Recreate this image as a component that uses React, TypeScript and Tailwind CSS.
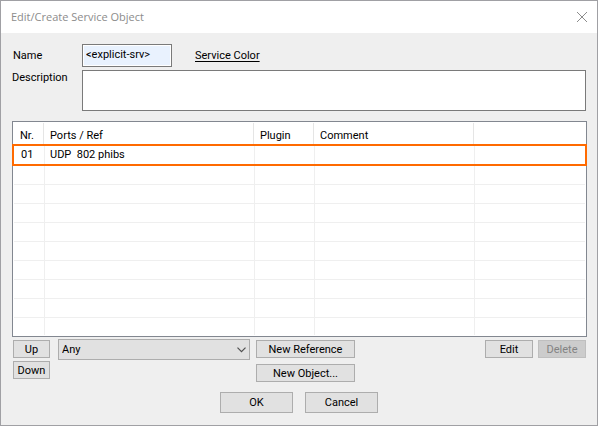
import React from "react";

const services = [{ nr: "01", ports: "UDP  802 phibs", plugin: "", comment: "" }];
const emptyRows = 9;

const Button = ({ children, className = "", disabled = false }) => {
  return (
    <button
      type="button"
      disabled={disabled}
      className={`border border-[#adadad] bg-[#e1e1e1] pt-px text-center whitespace-nowrap hover:bg-[#e5f1fb] disabled:border-[#bfbfbf] disabled:bg-[#cccccc] disabled:text-[#838383] ${className}`}
    >
      {children}
    </button>
  );
};

const ServiceForm = () => {
  return (
    <div className="flex flex-col gap-[3px] pr-px">
      <div className="flex items-center">
        <label htmlFor="name" className="w-[70px] pt-px pl-px">
          Name
        </label>
        <input
          id="name"
          defaultValue="<explicit-srv>"
          className="h-[23px] w-[90px] border border-[#7a7a7a] bg-[#e9f2fe] pl-[3px] pb-[2px] leading-4 outline-none ring-1 ring-inset ring-white"
        />
        <a href="#color" className="ml-[23px] pt-px underline underline-offset-2">
          Service Color
        </a>
      </div>
      <div className="flex">
        <label htmlFor="description" className="w-[70px] shrink-0">
          Description
        </label>
        <textarea
          id="description"
          className="h-[41px] min-w-0 flex-1 resize-none border border-[#7a7a7a] bg-white px-1 outline-none"
        />
      </div>
    </div>
  );
};

const ServiceTable = () => {
  return (
    <div className="mt-[10px] border border-[#828790] bg-white p-px">
      <table className="w-full table-fixed border-separate border-spacing-0 text-left">
        <colgroup>
          <col className="w-[30px]" />
          <col className="w-[210px]" />
          <col className="w-[60px]" />
          <col className="w-[160px]" />
          <col />
        </colgroup>
        <thead>
          <tr className="h-[23px] [&>th]:border-r [&>th]:border-[#e5e5e5] [&>th]:px-[6px] [&>th]:pt-[2px] [&>th]:pb-0 [&>th]:font-normal">
            <th>Nr.</th>
            <th>Ports / Ref</th>
            <th>Plugin</th>
            <th>Comment</th>
            <td></td>
          </tr>
        </thead>
        <tbody className="[&_td+td]:border-l [&_td]:border-[#efefef]">
          {services.map((service) => (
            <tr
              key={service.nr}
              className="h-[18px] whitespace-pre outline-2 outline-[#ff6a00]"
            >
              <td className="p-0 pl-[7px]">{service.nr}</td>
              <td className="p-0 pl-[5px]">{service.ports}</td>
              <td className="p-0 pl-[5px]">{service.plugin}</td>
              <td className="p-0 pl-[5px]">{service.comment}</td>
              <td className="p-0"></td>
            </tr>
          ))}
          {Array.from({ length: emptyRows }, (_, i) => (
            <tr
              key={i}
              className={
                i === 0
                  ? "h-[21px] [&>td]:border-b [&>td]:p-0"
                  : i === emptyRows - 1
                    ? "h-[17px] [&>td]:p-0"
                    : "h-[19px] [&>td]:border-b [&>td]:p-0"
              }
            >
              <td></td>
              <td></td>
              <td></td>
              <td></td>
              <td></td>
            </tr>
          ))}
        </tbody>
      </table>
    </div>
  );
};

const Toolbar = () => {
  return (
    <div className="mt-[2px] flex items-start px-px">
      <div className="flex w-[37px] flex-col gap-[3px] pt-px">
        <Button className="h-[18px]">Up</Button>
        <Button className="h-[18px]">Down</Button>
      </div>
      <div className="relative ml-2 w-[192px]">
        <select
          aria-label="Filter"
          className="block h-[21px] w-full appearance-none border border-[#adadad] bg-[#e1e1e1] pt-px pl-[3px] outline-none"
        >
          <option>Any</option>
        </select>
        <svg
          className="pointer-events-none absolute top-2 right-1 h-[6px] w-[9px]"
          viewBox="0 0 9 6"
          fill="none"
          stroke="#505050"
          strokeWidth="1.2"
        >
          <path d="M0.5 0.7L4.5 4.7L8.5 0.7" />
        </svg>
      </div>
      <div className="ml-[6px] flex w-[99px] flex-col gap-[6px] pt-px">
        <Button className="h-[18px]">New Reference</Button>
        <Button className="h-[18px]">New Object...</Button>
      </div>
      <div className="ml-auto flex gap-[5px] pt-px">
        <Button className="h-[18px] w-12">Edit</Button>
        <Button className="h-[18px] w-12" disabled>
          Delete
        </Button>
      </div>
    </div>
  );
};

const App = () => {
  return (
    <div className="border border-[#a0a0a4] bg-[#efefef] font-['Roboto',sans-serif] text-[11px] leading-4 text-black">
      <header className="flex h-8 items-center justify-between bg-white pr-[10px] pl-[10px]">
        <h1 className="font-['Open_Sans',sans-serif] text-[11px] text-[#8c8c8c]">
          Edit/Create Service Object
        </h1>
        <button type="button" aria-label="Close">
          <svg
            className="h-[10px] w-[10px]"
            viewBox="0 0 10 10"
            fill="none"
            stroke="#8c8c8c"
            strokeWidth="1"
          >
            <path d="M0 0L10 10M10 0L0 10" />
          </svg>
        </button>
      </header>
      <main className="px-[11px] pt-[11px] pr-[10px] pb-3">
        <ServiceForm />
        <ServiceTable />
        <Toolbar />
        <div className="mt-[10px] flex justify-center gap-3 pr-px">
          <Button className="h-[21px] w-[73px]">OK</Button>
          <Button className="h-[21px] w-[73px]">Cancel</Button>
        </div>
      </main>
    </div>
  );
};

export default App;
